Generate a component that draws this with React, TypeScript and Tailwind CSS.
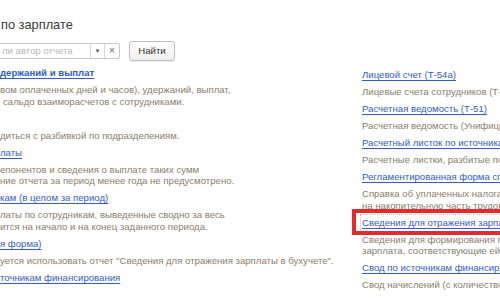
const LINK = 'text-[#3160c2] underline underline-offset-[2px] decoration-[1px] leading-[16px] h-[16px] whitespace-nowrap';
const DESC = 'text-[#8a7e6b] leading-[11.5px] whitespace-nowrap';

type Item = { link: string; bold?: boolean; desc: string[]; pad?: string[]; boxed?: boolean };

const LEFT: Item[] = [
  { link: 'держаний и выплат', bold: true, desc: ['вом оплаченных дней и часов), удержаний, выплат,', 'сальдо взаиморасчетов с сотрудниками.'], pad: ['', 'pl-[3px]'] },
  { link: '', desc: ['диться с разбивкой по подразделениям.'] },
  { link: 'латы', desc: ['епонентов и сведения о выплате таких сумм', 'ние отчета за период менее года не предусмотрено.'] },
  { link: 'кам (в целом за период)', desc: ['латы по сотрудникам, выведенные сводно за весь', 'ится на начало и на конец заданного периода.'] },
  { link: 'я форма)', desc: ['уется использовать отчет "Сведения для отражения зарплаты в бухучете".'] },
  { link: 'точникам финансирования', desc: [] },
];

const RIGHT: Item[] = [
  { link: 'Лицевой счет (Т-54а)', desc: ['Лицевые счета сотрудников (Т-54а)'] },
  { link: 'Расчетная ведомость (Т-51)', desc: ['Расчетная ведомость (Унифицированная форма Т-51)'] },
  { link: 'Расчетный листок по источникам финансирования', desc: ['Расчетные листки, разбитые по источникам финансирования'] },
  { link: 'Регламентированная форма справки о взносах', desc: ['Справка об уплаченных налогах и взносах', 'на накопительную часть трудовой пенсии'] },
  { link: 'Сведения для отражения зарплаты в бухучете', boxed: true, desc: ['Сведения для формирования проводок по начислениям,', 'зарплата, соответствующие ей начисления'] },
  { link: 'Свод по источникам финансирования', desc: ['Свод начислений (с количеством дней и часов)'] },
];

function ReportItem({ item }: { item: Item }) {
  return (
    <div className="mb-[3.5px]">
      <div className={`relative ${LINK} ${item.bold ? 'font-bold' : ''}`}>
        {item.boxed && (
          <>
            <span className="absolute -top-[1px] -bottom-[1px] -left-[2px] -right-[200px] border border-dotted border-[#c4c4c4]" />
            <span className="absolute -top-[6px] -bottom-[4px] -left-[10px] -right-[200px] border-[4px] border-[#e42a2d]" />
          </>
        )}
        <span className="relative">{item.link}</span>
      </div>
      {item.desc.length > 0 && (
        <div className="mt-[3px]">
          {item.desc.map((d, i) => (
            <div key={i} className={`${DESC} ${item.pad?.[i] ?? ''}`}>{d}</div>
          ))}
        </div>
      )}
    </div>
  );
}

export default function App() {
  return (
    <div
      className="w-[500px] h-[300px] overflow-hidden bg-white text-[9.6px] pt-[17px]"
      style={{ fontFamily: '"Liberation Sans", Arial, sans-serif' }}
    >
      <h1 className="text-[12.8px] leading-[16px] h-[16px] text-[#3a3a3a] pl-[1px] whitespace-nowrap">по зарплате</h1>

      {/* search row */}
      <div className="mt-[8px] h-[20px] flex items-center">
        <div className="-ml-[10px] w-[130px] h-[16px] flex border border-[#c9c9c9] rounded-[2px] bg-white">
          <div className="flex-1 pl-[11px] text-[#b8b8b8] leading-[14px] whitespace-nowrap overflow-hidden">ли автор отчета</div>
          <div className="w-[14px] border-l border-[#d6d6d6] flex items-center justify-center text-[#555] text-[6px]">▼</div>
          <div className="w-[15px] border-l border-[#d6d6d6] flex items-center justify-center text-[#666] text-[10px] leading-none">×</div>
        </div>
        <button className="ml-[9px] w-[46px] h-[20px] border border-[#bdbdbd] rounded-[3px] bg-gradient-to-b from-white to-[#efefef] text-[#333] text-[9.6px] shadow-[0_1px_1px_rgba(0,0,0,0.08)]">
          Найти
        </button>
      </div>

      <div className="mt-[4px] flex">
        <div className="w-[362px] shrink-0">
          {LEFT.map((it, i) => <ReportItem key={i} item={it} />)}
        </div>
        <div className="flex-1 min-w-0 pt-[2px]">
          {RIGHT.map((it, i) => <ReportItem key={i} item={it} />)}
        </div>
      </div>
    </div>
  );
}
